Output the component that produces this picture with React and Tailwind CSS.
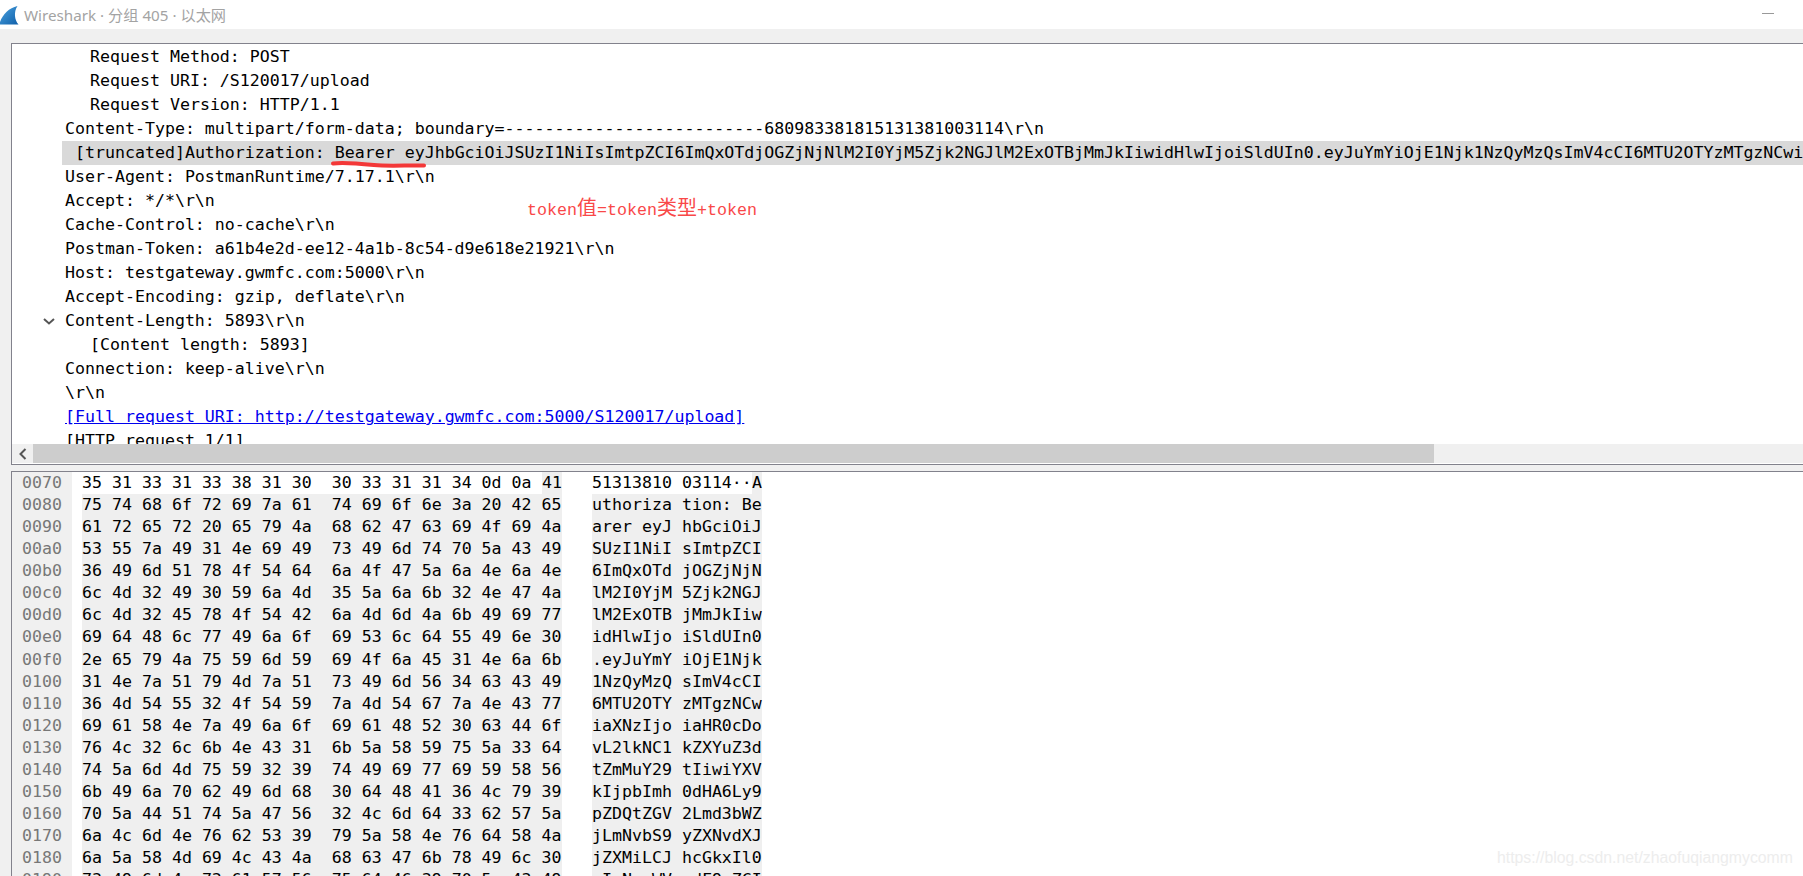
const mono = "font-['DejaVu_Sans_Mono','Liberation_Mono',monospace]";

const detailLines = [
  { text: "Request Method: POST", indent: true },
  { text: "Request URI: /S120017/upload", indent: true },
  { text: "Request Version: HTTP/1.1", indent: true },
  { text: "Content-Type: multipart/form-data; boundary=--------------------------680983381815131381003114\\r\\n" },
  { text: "[truncated]Authorization: Bearer eyJhbGciOiJSUzI1NiIsImtpZCI6ImQxOTdjOGZjNjNlM2I0YjM5Zjk2NGJlM2ExOTBjMmJkIiwidHlwIjoiSldUIn0.eyJuYmYiOjE1Njk1NzQyMzQsImV4cCI6MTU2OTYzMTgzNCwiaXNzIjoi", selected: true },
  { text: "User-Agent: PostmanRuntime/7.17.1\\r\\n" },
  { text: "Accept: */*\\r\\n" },
  { text: "Cache-Control: no-cache\\r\\n" },
  { text: "Postman-Token: a61b4e2d-ee12-4a1b-8c54-d9e618e21921\\r\\n" },
  { text: "Host: testgateway.gwmfc.com:5000\\r\\n" },
  { text: "Accept-Encoding: gzip, deflate\\r\\n" },
  { text: "Content-Length: 5893\\r\\n", open: true },
  { text: "[Content length: 5893]", indent: true },
  { text: "Connection: keep-alive\\r\\n" },
  { text: "\\r\\n" },
  { text: "[Full request URI: http://testgateway.gwmfc.com:5000/S120017/upload]", link: true },
  { text: "[HTTP request 1/1]" },
];

const hexRows = [
  ["0080", "75 74 68 6f 72 69 7a 61  74 69 6f 6e 3a 20 42 65", "uthoriza tion: Be"],
  ["0090", "61 72 65 72 20 65 79 4a  68 62 47 63 69 4f 69 4a", "arer eyJ hbGciOiJ"],
  ["00a0", "53 55 7a 49 31 4e 69 49  73 49 6d 74 70 5a 43 49", "SUzI1NiI sImtpZCI"],
  ["00b0", "36 49 6d 51 78 4f 54 64  6a 4f 47 5a 6a 4e 6a 4e", "6ImQxOTd jOGZjNjN"],
  ["00c0", "6c 4d 32 49 30 59 6a 4d  35 5a 6a 6b 32 4e 47 4a", "lM2I0YjM 5Zjk2NGJ"],
  ["00d0", "6c 4d 32 45 78 4f 54 42  6a 4d 6d 4a 6b 49 69 77", "lM2ExOTB jMmJkIiw"],
  ["00e0", "69 64 48 6c 77 49 6a 6f  69 53 6c 64 55 49 6e 30", "idHlwIjo iSldUIn0"],
  ["00f0", "2e 65 79 4a 75 59 6d 59  69 4f 6a 45 31 4e 6a 6b", ".eyJuYmY iOjE1Njk"],
  ["0100", "31 4e 7a 51 79 4d 7a 51  73 49 6d 56 34 63 43 49", "1NzQyMzQ sImV4cCI"],
  ["0110", "36 4d 54 55 32 4f 54 59  7a 4d 54 67 7a 4e 43 77", "6MTU2OTY zMTgzNCw"],
  ["0120", "69 61 58 4e 7a 49 6a 6f  69 61 48 52 30 63 44 6f", "iaXNzIjo iaHR0cDo"],
  ["0130", "76 4c 32 6c 6b 4e 43 31  6b 5a 58 59 75 5a 33 64", "vL2lkNC1 kZXYuZ3d"],
  ["0140", "74 5a 6d 4d 75 59 32 39  74 49 69 77 69 59 58 56", "tZmMuY29 tIiwiYXV"],
  ["0150", "6b 49 6a 70 62 49 6d 68  30 64 48 41 36 4c 79 39", "kIjpbImh 0dHA6Ly9"],
  ["0160", "70 5a 44 51 74 5a 47 56  32 4c 6d 64 33 62 57 5a", "pZDQtZGV 2Lmd3bWZ"],
  ["0170", "6a 4c 6d 4e 76 62 53 39  79 5a 58 4e 76 64 58 4a", "jLmNvbS9 yZXNvdXJ"],
  ["0180", "6a 5a 58 4d 69 4c 43 4a  68 63 47 6b 78 49 6c 30", "jZXMiLCJ hcGkxIl0"],
  ["0190", "73 49 6d 4e 73 61 57 56  75 64 46 39 70 5a 43 49", "sImNsaWV udF9pZCI"],
];

function SharkIcon() {
  return (
    <svg width="19" height="19" viewBox="0 0 19 19" className="shrink-0">
      <defs>
        <linearGradient id="fin" x1="0" y1="0" x2="1" y2="1">
          <stop offset="0" stopColor="#4aa3e0" />
          <stop offset="1" stopColor="#0f5ea8" />
        </linearGradient>
      </defs>
      <path d="M17.5 0 C9 2 3 8 0 16 L0 18.5 L18.5 18.5 C14.5 14 13.5 6 17.5 0 Z" fill="url(#fin)" />
    </svg>
  );
}

function DetailRow({ line }) {
  if (line.selected) {
    return (
      <div className="h-6 ml-[50px] pl-[13px] bg-[#d9d9d9] whitespace-pre">{line.text}</div>
    );
  }
  return (
    <div className={`relative h-6 whitespace-pre ${line.indent ? "pl-[78px]" : "pl-[53px]"}`}>
      {line.open && (
        <svg width="12" height="7" viewBox="0 0 12 7" className="absolute left-[31px] top-[9px]">
          <path d="M1 1 L6 5.5 L11 1" fill="none" stroke="#555" strokeWidth="2" />
        </svg>
      )}
      {line.link ? <span className="text-[#0000ee] underline">{line.text}</span> : line.text}
    </div>
  );
}

export default function App() {
  return (
    <div className={`relative h-screen w-full overflow-hidden bg-[#f0f0f0] text-black flex flex-col ${mono} text-[16.6px] leading-6`}>
      <div className="h-[29px] shrink-0 bg-white flex items-center relative">
        <div className="mt-px"><SharkIcon /></div>
        <span className="ml-[5px] font-['Noto_Sans','Noto_Sans_CJK_SC',sans-serif] text-[15.2px] text-[#a3a3a3]">Wireshark · 分组 405 · 以太网</span>
        <div className="absolute left-[1762px] top-[13px] w-3 h-px bg-[#999]" />
      </div>

      <div className="h-[422px] shrink-0 mt-[14px] ml-[11px] border-t border-l border-b border-[#82828c] bg-white flex flex-col">
        <div className="h-[400px] overflow-hidden pt-px relative">
          {detailLines.map((line, i) => (
            <DetailRow key={i} line={line} />
          ))}
        </div>
        <div className="h-[19px] shrink-0 bg-[#f0f0f0] flex">
          <div className="w-[21px] flex items-center justify-center">
            <svg width="8" height="12" viewBox="0 0 8 12">
              <path d="M6.5 1 L1.5 6 L6.5 11" fill="none" stroke="#555" strokeWidth="2" />
            </svg>
          </div>
          <div className="w-[1401px] bg-[#cdcdcd]" />
        </div>
      </div>

      <div className="flex-1 mt-[6px] ml-[11px] border-t border-l border-[#82828c] bg-white overflow-hidden leading-[22.07px] whitespace-pre">
        <div className="flex h-[22.07px]">
          <div className="w-[60px] pl-[10px] bg-[#f0f0f0] text-[#777]">0070</div>
          <div className="w-[460px] ml-[10px]">35 31 33 31 33 38 31 30  30 33 31 31 34 0d 0a</div>
          <div className="w-5 bg-[#efefef] text-center">41</div>
          <div className="w-[160px] ml-[30px]">51313810 03114··</div>
          <div className="w-2.5 bg-[#efefef]">A</div>
        </div>
        {hexRows.map(([offset, hex, ascii]) => (
          <div key={offset} className="flex h-[22.07px]">
            <div className="w-[60px] pl-[10px] bg-[#f0f0f0] text-[#777]">{offset}</div>
            <div className="w-[480px] ml-[10px] bg-[#efefef]">{hex}</div>
            <div className="w-[170px] ml-[30px] bg-[#efefef]">{ascii}</div>
          </div>
        ))}
      </div>

      <svg width="100" height="10" viewBox="0 0 100 10" className="absolute left-[329px] top-[159px]">
        <path d="M4 4.5 C14 3 30 4.5 45 6 S80 6 95 6.5" fill="none" stroke="#f33838" strokeWidth="4" strokeLinecap="round" />
      </svg>

      <div className="absolute left-[527px] top-[195px] text-[#f94848] font-['Liberation_Mono','Noto_Sans_CJK_SC',monospace] text-[16.67px]">
        token<span className="text-[20px] font-['Noto_Sans_CJK_SC',sans-serif]">值</span>=token<span className="text-[20px] font-['Noto_Sans_CJK_SC',sans-serif]">类型</span>+token
      </div>

      <div className="absolute left-[1497px] top-[848px] font-['Liberation_Sans',sans-serif] text-[15.8px] leading-5 text-[#ededed]">
        https://blog.csdn.net/zhaofuqiangmycomm
      </div>
    </div>
  );
}
